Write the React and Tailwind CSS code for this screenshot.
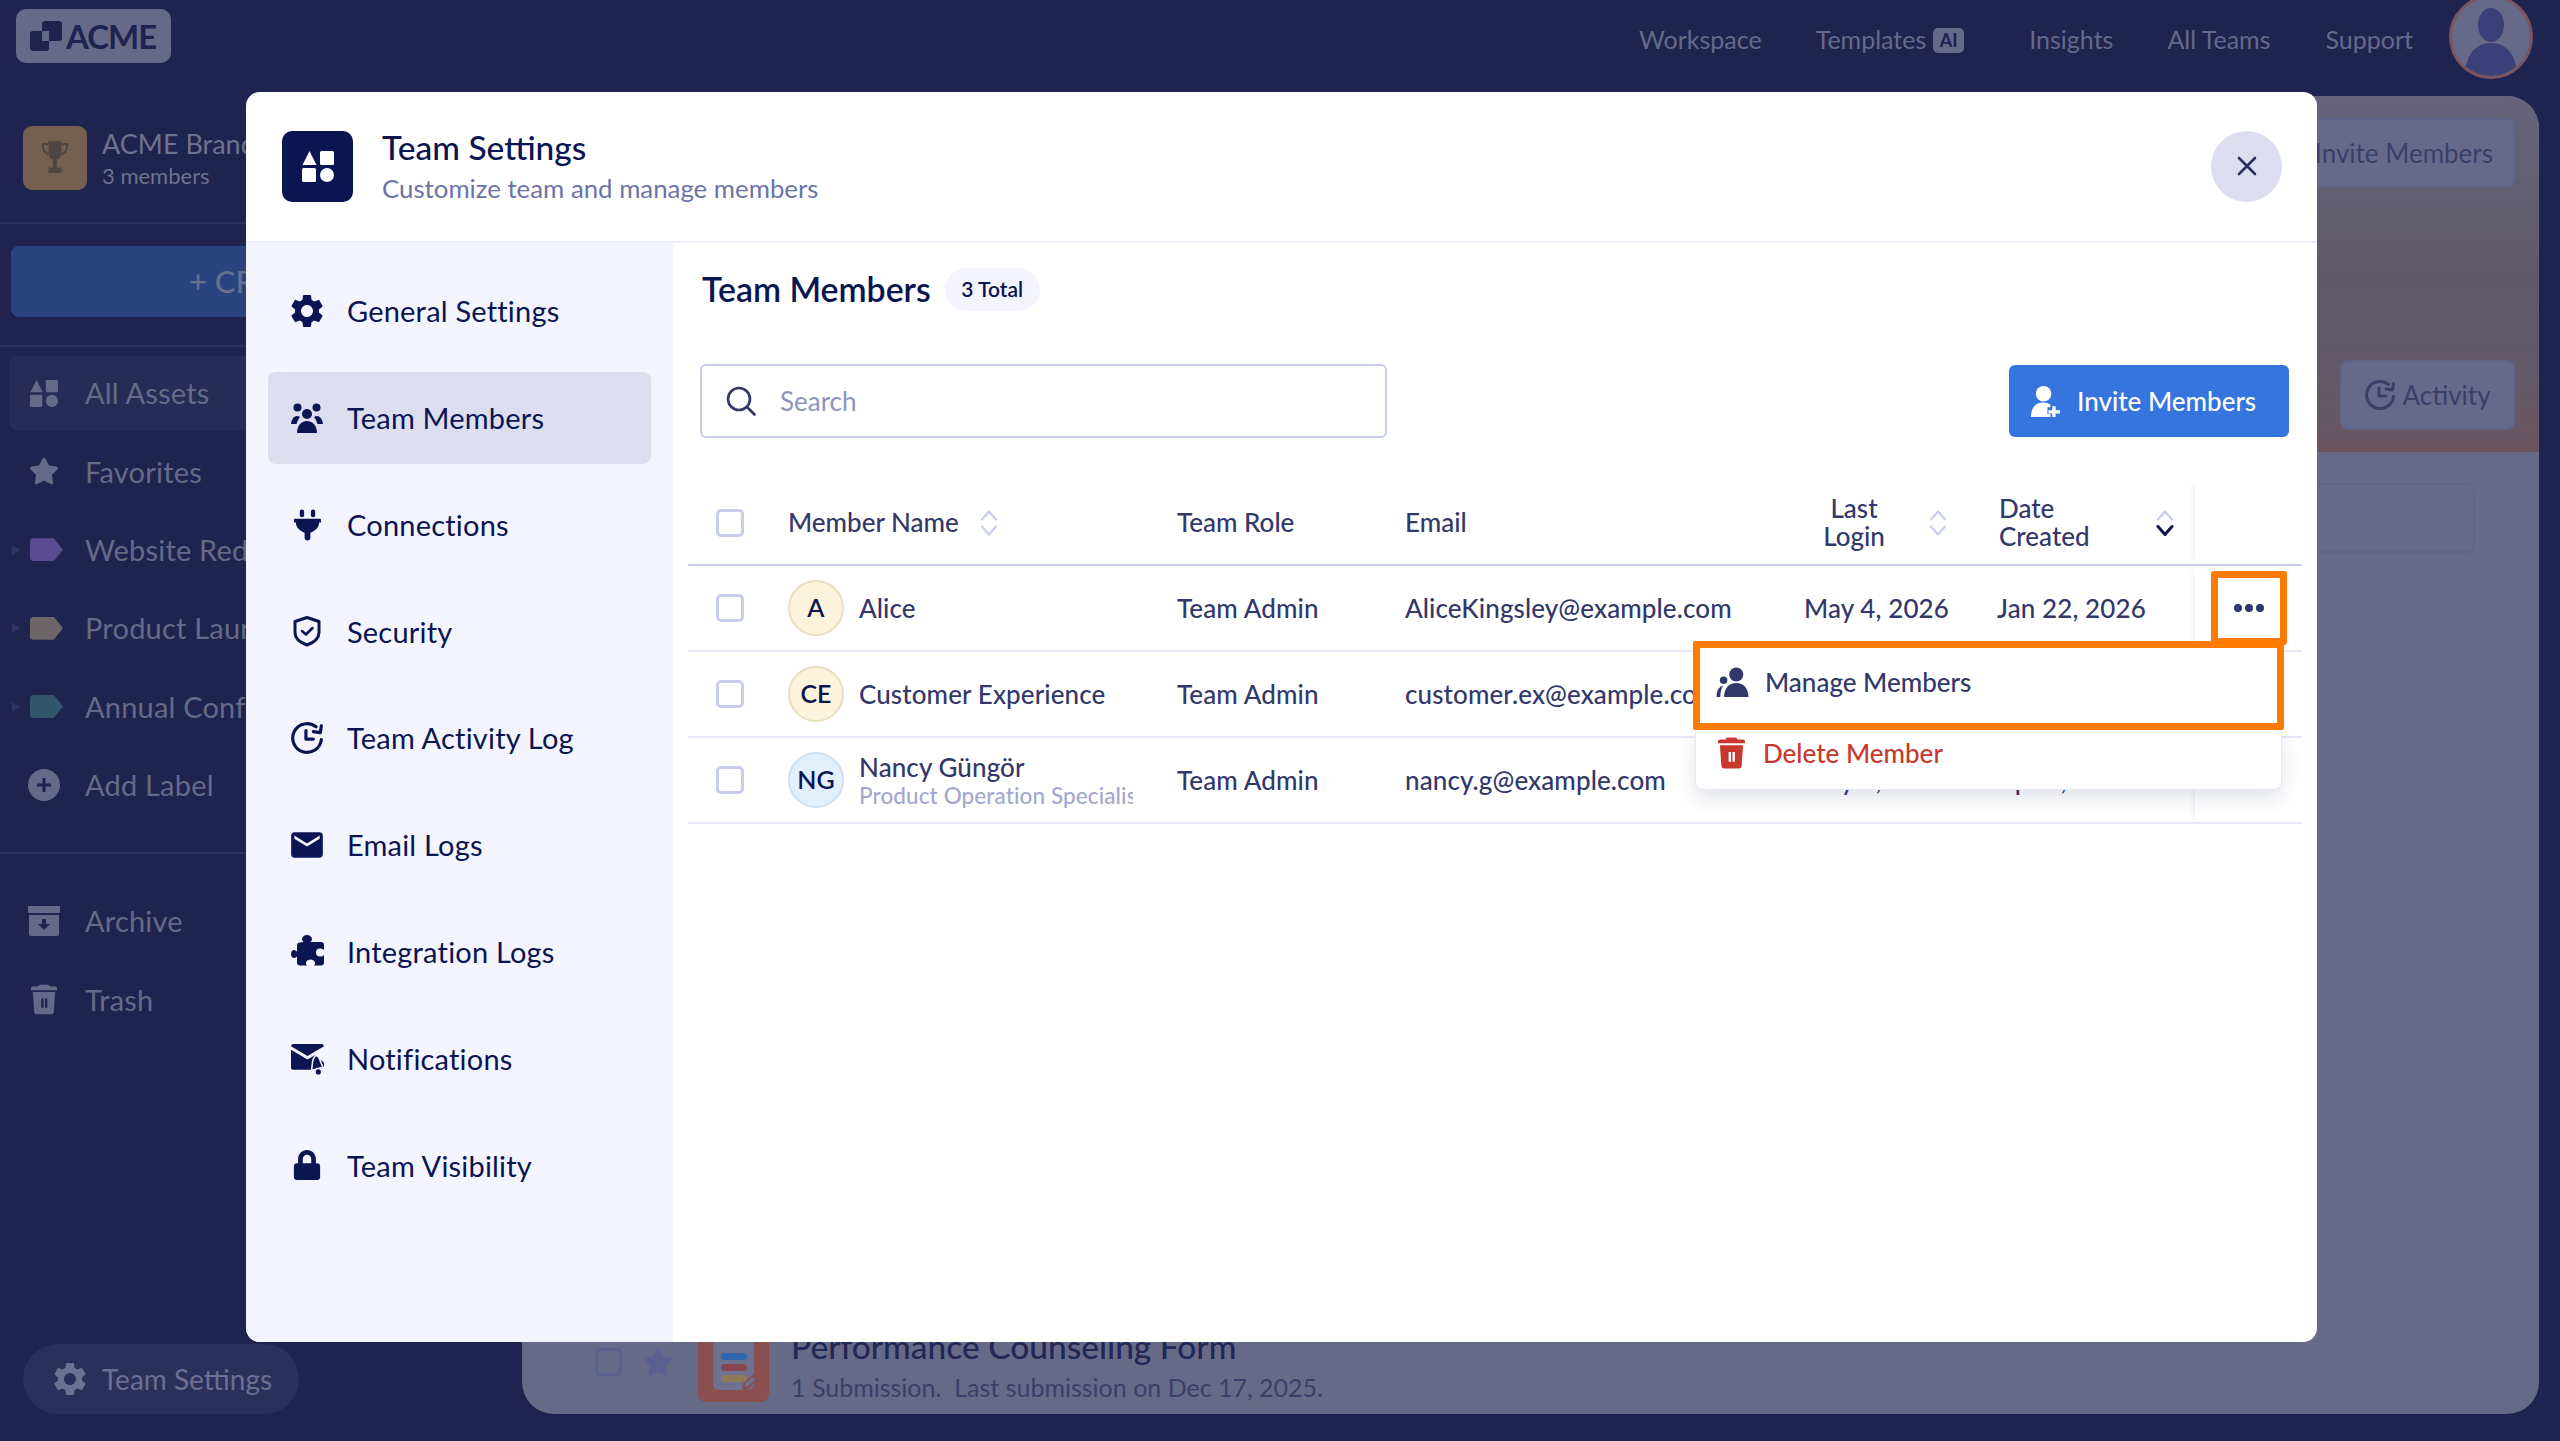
import { FaLock, FaStar } from 'react-icons/fa';
import { MdEmail, MdSettings } from 'react-icons/md';

const SIDE_ITEMS = [
  { label: 'General Settings', icon: <MdSettings size={40} /> },
  { label: 'Team Members', icon: <PeopleIcon /> },
  { label: 'Connections', icon: <PlugIcon /> },
  { label: 'Security', icon: <ShieldIcon /> },
  { label: 'Team Activity Log', icon: <ActivityIcon className="w-[34px] h-[34px]" /> },
  { label: 'Email Logs', icon: <MdEmail size={38} /> },
  { label: 'Integration Logs', icon: <PuzzleIcon /> },
  { label: 'Notifications', icon: <MailBellIcon /> },
  { label: 'Team Visibility', icon: <FaLock size={30} /> },
];

const MEMBERS = [
  { initials: 'A', name: 'Alice', email: 'AliceKingsley@example.com', login: 'May 4, 2026', created: 'Jan 22, 2026', tone: 'bg-[#fbf3dc] border-[#eadfc0]', dots: true },
  { initials: 'CE', name: 'Customer Experience', email: 'customer.ex@example.com', login: 'May 4, 2026', created: 'Jan 22, 2026', tone: 'bg-[#fbf3dc] border-[#eadfc0]' },
  { initials: 'NG', name: 'Nancy Güngör', sub: 'Product Operation Specialist', email: 'nancy.g@example.com', login: 'May 4, 2026', created: 'Apr 9, 2026', tone: 'bg-[#e1f0fb] border-[#cfe0ee]' },
];

const COLS = 'grid grid-cols-[100px_389px_228px_399px_193px_198px_108px]';

function ShapesIcon({ className }) {
  return (
    <svg viewBox="0 0 32 32" className={className} fill="currentColor">
      <path d="M7.500 1 14.500 15H.5z" />
      <rect x="18" y="1" width="14" height="14" rx="1.500" />
      <rect x="0" y="18" width="14" height="14" rx="1.500" />
      <ellipse cx="25" cy="25" rx="7" ry="7" />
    </svg>
  );
}

function PeopleIcon() {
  return (
    <svg viewBox="0 0 32 30" className="w-[32px] h-[30px] shrink-0" fill="currentColor">
      <circle cx="6.500" cy="4.500" r="4" />
      <circle cx="25.500" cy="4.500" r="4" />
      <circle cx="16" cy="11" r="5" />
      <path d="M6 30c0-7 4-12 10-12s10 5 10 12z" />
      <path d="M0 21c.5-4 2.500-8 6-8 1 0 2 .3 3 1-1.500 2-2.800 4.500-3.500 7z" />
      <path d="M32 21c-.5-4-2.500-8-6-8-1 0-2 .3-3 1 1.500 2 2.800 4.500 3.500 7z" />
    </svg>
  );
}

function PlugIcon() {
  return (
    <svg viewBox="0 0 28 32" className="w-[27px] h-[32px] shrink-0" fill="currentColor">
      <rect x="6" y="0" width="4.500" height="8" rx="2.200" />
      <rect x="17.500" y="0" width="4.500" height="8" rx="2.200" />
      <path d="M1 9.500h26a1 1 0 0 1 1 1v3h-2c0 5-4 9-9 10.500v5a3 3 0 0 1-6 0v-5C6 22.500 2 18.500 2 13.500H0v-3a1 1 0 0 1 1-1z" />
    </svg>
  );
}

function PuzzleIcon() {
  return (
    <svg viewBox="0 0 33 33" className="w-[33px] h-[33px] shrink-0" fill="currentColor">
      <path d="M12.500 7c-1-1-1.500-2-1.500-3a5 4 0 0 1 10 0c0 1-.5 2-1.500 3H30a3 3 0 0 1 3 3v5c-1-1-2.500-1.500-4-1.500a4 4 0 0 0 0 8c1.500 0 3-.5 4-1.500v7.500a3 3 0 0 1-3 3h-7c1-1 1.300-2 1-3-.5-2-2.500-3-4.500-3s-4 1-4.500 3c-.3 1 0 2 1 3H9a3 3 0 0 1-3-3v-6c-1 1-2 1.500-3 1.500-2 0-3-2-3-4s1-4 3-4c1 0 2 .5 3 1.500v-6a3 3 0 0 1 3-3z" />
    </svg>
  );
}

function ShieldIcon() {
  return (
    <svg viewBox="0 0 32 32" className="w-[32px] h-[34px] shrink-0" fill="none" stroke="currentColor" strokeWidth="3" strokeLinejoin="round" strokeLinecap="round">
      <path d="M16 2.500 28 6.500v11c0 6-5 10-12 12.500C9 27.500 4 23.500 4 17.500v-11z" />
      <path d="m11 16 4 3.500 6.500-6.500" strokeWidth="2.500" />
    </svg>
  );
}

function ActivityIcon({ className }) {
  return (
    <svg viewBox="0 0 32 32" className={`${className} shrink-0`} fill="none" stroke="currentColor" strokeWidth="3" strokeLinecap="round" strokeLinejoin="round">
      <path d="M29.500 17.500A13.500 13.500 0 1 1 24.500 5.500" />
      <path d="M29.500 4.500 28.500 11 22 10" />
      <path d="M15 9v8h7" />
    </svg>
  );
}

function MailBellIcon() {
  return (
    <svg viewBox="0 0 32 32" className="w-[33px] h-[33px] shrink-0" fill="currentColor">
      <path d="M2.500 2h27A2.500 2.500 0 0 1 32 4.200L16 13.500 0 4.200A2.500 2.500 0 0 1 2.500 2z" />
      <path d="M0 7.500 16 17l7.500-4.500L32 20v4h-11.500l-.5 3H2.500A2.500 2.500 0 0 1 0 24.500z" />
      <path d="M24.500 13c3 1.500 3.500 4 4.500 7l2 4.500-11 3 .5-5c.2-3 1.500-8 4-9.500z" stroke="#f3f4fd" strokeWidth="1.500" />
      <circle cx="26.500" cy="29" r="2.500" />
    </svg>
  );
}

function TrashIcon({ className }) {
  return (
    <svg viewBox="0 0 28 32" className={className} fill="currentColor">
      <path d="M10 0h8a2 2 0 0 1 2 2h6a2 2 0 0 1 2 2v2H0V4a2 2 0 0 1 2-2h6a2 2 0 0 1 2-2z" />
      <path fillRule="evenodd" d="M2 8h24l-1.500 21.500A2.700 2.700 0 0 1 22 32H6a2.700 2.700 0 0 1-2.500-2.500zm9 7v10h2.500V15zm4 0v10h2.500V15z" />
    </svg>
  );
}

function Sort({ active }) {
  return (
    <svg viewBox="0 0 18 28" className="w-[18px] h-[28px] shrink-0" fill="none" strokeWidth="2.200" strokeLinecap="round" strokeLinejoin="round">
      <path d="m2 10.500 7-8 7 8" stroke="#c8cdef" />
      <path d="m2 17.500 7 8 7-8" stroke={active ? '#0a1551' : '#c8cdef'} strokeWidth={active ? 3 : 2.200} />
    </svg>
  );
}

function Checkbox({ className = '' }) {
  return <span className={`block w-[28px] h-[28px] rounded-[5px] border-[3px] border-[#c8cdef] bg-white ${className}`} />;
}

function NavLink({ children }) {
  return <a className="text-[#666a88]">{children}</a>;
}

function LeftRow({ icon, label, active, arrow }) {
  return (
    <div className={`relative h-[74px] flex items-center pl-[18px] gap-[24px] rounded-[8px] ml-[9px] text-[#666a88] ${active ? 'bg-[#272b57]' : ''}`}>
      {arrow && <span className="absolute left-[3px] w-0 h-0 border-y-[5px] border-y-transparent border-l-[8px] border-l-[#2f3462]" />}
      <span className="w-[34px] flex justify-center shrink-0">{icon}</span>
      <span className="whitespace-nowrap text-[29px] tracking-[0.2px]">{label}</span>
    </div>
  );
}

function Tag({ color }) {
  return <span className={`block w-[33px] h-[23px] ml-[5px] shrink-0 ${color} rounded-[4px] [clip-path:polygon(0_0,72%_0,100%_50%,72%_100%,0_100%)]`} />;
}

function Backdrop() {
  return (
    <>
      <header className="h-[92px] flex items-center pl-[16px] pr-[27px]">
        <div className="w-[155px] h-[54px] -mt-[20px] bg-[#666a88] rounded-[10px] flex items-center pl-[14px] gap-[4px] text-[#1e2350]">
          <svg viewBox="0 0 32 30" className="w-[32px] h-[30px]" fill="currentColor">
            <rect x="12" y="0" width="20" height="20" rx="3" />
            <rect x="0" y="10" width="19" height="20" rx="3" />
            <rect x="12" y="10" width="7" height="10" fill="#666a88" />
          </svg>
          <span className="text-[33px] font-bold tracking-[-1px] leading-none">ACME</span>
        </div>
        <nav className="ml-auto flex items-center -mt-[12px] text-[25px]">
          <NavLink>Workspace</NavLink>
          <div className="flex items-center ml-[54px] gap-[7px]">
            <NavLink>Templates</NavLink>
            <span className="w-[31px] h-[25px] rounded-[5px] bg-[#666a88] text-[#1e2350] text-[18px] font-bold flex items-center justify-center">AI</span>
          </div>
          <div className="ml-[65px]"><NavLink>Insights</NavLink></div>
          <div className="ml-[54px]"><NavLink>All Teams</NavLink></div>
          <div className="ml-[55px]"><NavLink>Support</NavLink></div>
          <div className="ml-[36px] w-[84px] h-[84px] rounded-full border-[3px] border-[#7a5560] bg-[#666a88] overflow-hidden -mt-[6px]">
            <svg viewBox="0 0 78 78" className="w-full h-full" fill="#3a4078">
              <ellipse cx="39" cy="27" rx="13" ry="17" />
              <path d="M13 78c0-20 10-33 26-33s26 13 26 33z" />
            </svg>
          </div>
        </nav>
      </header>

      <div className="flex h-[1349px]">
        <aside className="w-[522px] shrink-0 flex flex-col">
          <div className="flex items-center gap-[15px] pl-[23px] mt-[34px] h-[64px]">
            <div className="w-[64px] h-[64px] rounded-[9px] bg-[#75604f] flex items-center justify-center text-[#4e4641]">
              <svg viewBox="0 0 32 40" className="w-[30px] h-[38px]" fill="currentColor">
                <path d="M9 2h14v12c0 5-3 8-7 8s-7-3-7-8zM14 22h4v8h-4zM9 30h14v6H9z" />
                <path d="M9 5H3c0 6 2 10 6 11M23 5h6c0 6-2 10-6 11" fill="none" stroke="currentColor" strokeWidth="2" />
              </svg>
            </div>
            <div className="flex flex-col whitespace-nowrap text-[#6f7290]">
              <span className="text-[27px] leading-[36px]">ACME Branding Team</span>
              <span className="text-[22px] leading-[28px]">3 members</span>
            </div>
          </div>
          <div className="h-[2px] bg-[#2a2f5c] mt-[32px]" />
          <div className="h-[71px] ml-[11px] mt-[22px] rounded-[8px] bg-[#2b437f] flex items-center pl-[178px] text-[#66708f] text-[31px] font-medium">
            + CREATE
          </div>
          <div className="h-[2px] bg-[#2a2f5c] mt-[28px]" />
          <div className="flex flex-col gap-[4.400px] mt-[9px] mr-[40px]">
            <LeftRow active label="All Assets" icon={<ShapesIcon className="w-[28px] h-[28px]" />} />
            <LeftRow label="Favorites" icon={<FaStar size={30} />} />
            <LeftRow arrow label="Website Redesign" icon={<Tag color="bg-[#5a4a8f]" />} />
            <LeftRow arrow label="Product Launch" icon={<Tag color="bg-[#6d6668]" />} />
            <LeftRow arrow label="Annual Conference" icon={<Tag color="bg-[#33566b]" />} />
            <LeftRow label="Add Label" icon={
              <svg viewBox="0 0 32 32" className="w-[32px] h-[32px]"><circle cx="16" cy="16" r="16" fill="#666a88" /><path d="M16 9v14M9 16h14" stroke="#1e2350" strokeWidth="3" /></svg>
            } />
          </div>
          <div className="h-[2px] bg-[#2a2f5c] mt-[30px]" />
          <div className="flex flex-col gap-[4.400px] mt-[30px] mr-[40px]">
            <LeftRow label="Archive" icon={
              <svg viewBox="0 0 32 32" className="w-[32px] h-[32px]" fill="#666a88"><rect x="0" y="1" width="32" height="7" rx="1" /><path d="M1 10h30v19a2 2 0 0 1-2 2H3a2 2 0 0 1-2-2z" /><path d="M14 14h4v5h4l-6 6-6-6h4z" fill="#1e2350" /></svg>
            } />
            <LeftRow label="Trash" icon={<TrashIcon className="w-[26px] h-[31px]" />} />
          </div>
          <div className="mt-auto mb-[27px] ml-[23px] w-[276px] h-[70px] rounded-full bg-[#2b2f5c] flex items-center pl-[27px] gap-[12px] text-[#6c7091] shrink-0">
            <MdSettings size={40} />
            <span className="text-[28px] whitespace-nowrap">Team Settings</span>
          </div>
        </aside>

        <main className="w-[2017px] h-[1318px] mt-[4px] rounded-[32px] bg-[#676a87] overflow-hidden flex flex-col">
          <div className="h-[356px] flex flex-col items-end pr-[24px] pt-[22px] bg-[linear-gradient(180deg,#66647c_0%,#5f5a6a_50%,#62596a_80%,#6b5560_100%)]">
            <div className="w-[260px] h-[69px] rounded-[8px] border-2 border-[#5f6488] bg-[#666a88] flex items-center justify-end pr-[20px] pt-[2px] text-[#3a3f68] text-[26px]">Invite Members</div>
            <div className="mt-[173px] w-[175px] h-[70px] rounded-[8px] border-2 border-[#5f6488] bg-[#666a88] flex items-center justify-center gap-[6px] text-[#3a3f68] text-[26px]">
              <ActivityIcon className="w-[32px] h-[32px]" />
              Activity
            </div>
          </div>
          <div className="self-end mt-[31px] mr-[64px] w-[600px] h-[70px] rounded-[8px] border-2 border-[#5f6488]" />
          <div className="mt-auto mb-[12px] h-[80px] flex items-center pl-[73px]">
            <span className="block w-[27px] h-[28px] rounded-[5px] border-[3px] border-[#5a6090]" />
            <span className="ml-[21px] text-[#5a6090]"><FaStar size={30} /></span>
            <div className="ml-[25px] w-[71px] h-[80px] rounded-[8px] bg-[#8a5050] flex items-end justify-center pb-[12px]">
              <div className="relative w-[41px] h-[60px] rounded-[6px] bg-[#6f7190] flex flex-col items-center justify-end gap-[4px] pb-[8px]">
                <span className="w-[26px] h-[7px] bg-[#2f66ad] rounded-full" />
                <span className="w-[26px] h-[7px] bg-[#8a4650] rounded-full" />
                <span className="w-[26px] h-[7px] bg-[#8f7a55] rounded-full" />
                <svg viewBox="0 0 20 20" className="absolute -right-[6px] -bottom-[2px] w-[20px] h-[20px]">
                  <path d="M15 1 19 5 9 17 2 19 3 11z" fill="#8a5050" />
                  <path d="M13 5 15.500 7.500 8.500 14 5 15 6 11z" fill="#6f7190" />
                </svg>
              </div>
            </div>
            <div className="ml-[22px] flex flex-col mt-[6px]">
              <span className="text-[33.500px] leading-[38px] text-[#232755] font-medium">Performance Counseling Form</span>
              <span className="text-[25px] leading-[34px] mt-[5px] text-[#3a3f68] whitespace-pre">1 Submission.  Last submission on Dec 17, 2025.</span>
            </div>
          </div>
        </main>
      </div>
    </>
  );
}

function MemberRow({ member }) {
  return (
    <div className={`${COLS} h-[86px] border-b-2 border-[#e6e8f8] items-center text-[#33386b] text-[26px] tracking-[0.1px] font-medium`}>
      <div className="pl-[28px]"><Checkbox /></div>
      <div className="flex items-center gap-[15px] min-w-0">
        <span className={`w-[56px] h-[56px] shrink-0 rounded-full border-2 ${member.tone} flex items-center justify-center text-[#0a1551] text-[25px] font-semibold`}>{member.initials}</span>
        <div className="flex flex-col min-w-0 w-[274px] overflow-hidden -mt-[1px]">
          <span className="whitespace-nowrap leading-[32px]">{member.name}</span>
          {member.sub && <span className="whitespace-nowrap text-[#a3a7d0] text-[22.500px] leading-[26px]">{member.sub}</span>}
        </div>
      </div>
      <div>Team Admin</div>
      <div>{member.email}</div>
      <div>{member.login}</div>
      <div>{member.created}</div>
      <div className="h-full bg-white pl-[16px] flex items-center shadow-[-5px_0_6px_-3px_rgba(10,21,81,0.06)]">
        {member.dots && (
          <button className="w-[76px] h-[74px] rounded-[3px] border-[7px] border-[#ff7a00] flex items-center justify-center gap-[3px]">
            <span className="w-[8px] h-[8px] rounded-full bg-[#33386b]" />
            <span className="w-[8px] h-[8px] rounded-full bg-[#33386b]" />
            <span className="w-[8px] h-[8px] rounded-full bg-[#33386b]" />
          </button>
        )}
      </div>
    </div>
  );
}

function TeamTable() {
  return (
    <div className="relative mt-[43px] mx-[15px]">
      <div className={`${COLS} h-[85px] border-b-2 border-[#c8cdef] items-center text-[#33386b] text-[26px] font-medium`}>
        <div className="pl-[28px]"><Checkbox /></div>
        <div className="flex items-center gap-[21px]">Member Name <Sort /></div>
        <div>Team Role</div>
        <div>Email</div>
        <div className="flex items-center">
          <span className="w-[100px] text-center leading-[28px] -mt-[2px]">Last<br />Login</span>
          <span className="ml-[25px]"><Sort /></span>
        </div>
        <div className="flex items-center pl-[2px]">
          <span className="w-[157px] leading-[28px] -mt-[2px]">Date<br />Created</span>
          <Sort active />
        </div>
        <div className="h-full bg-white shadow-[-5px_0_6px_-3px_rgba(10,21,81,0.06)]" />
      </div>
      {MEMBERS.map(m => <MemberRow key={m.name} member={m} />)}

      <div className="absolute left-[1005px] top-[160px] w-[591px]">
        <div className="h-[89px] border-[7px] border-[#ff7a00] rounded-[2px] bg-white flex items-center pl-[16px] pb-[7px] gap-[16px] text-[#33386b] text-[26px] font-medium relative z-10">
          <svg viewBox="0 0 34 32" className="w-[33px] h-[30px]" fill="currentColor">
            <circle cx="21" cy="8" r="7.500" />
            <path d="M8 32c0-9 5-15 13-15s13 6 13 15z" />
            <circle cx="7.500" cy="14" r="4" />
            <path d="M0 32c0-6 2-11 7-12-2 3-3 7-3 12z" />
          </svg>
          Manage Members
        </div>
        <div className="mx-[2px] h-[60px] rounded-b-[8px] bg-white border border-[#e6e8f8] border-t-0 flex items-center pl-[22px] pb-[13px] gap-[18px] text-[#c8382e] text-[26px] font-medium shadow-[0_8px_20px_rgba(10,21,81,0.12)]">
          <TrashIcon className="w-[27px] h-[32px]" />
          Delete Member
        </div>
      </div>
    </div>
  );
}

function TeamSettingsModal() {
  return (
    <div className="absolute left-[246px] top-[92px] w-[2071px] h-[1250px] rounded-[14px] bg-white overflow-hidden flex flex-col">
      <div className="h-[151px] shrink-0 border-b-2 border-[#eceefa] flex items-center pl-[36px] pr-[35px] pb-[1px]">
        <div className="w-[71px] h-[71px] rounded-[10px] bg-[#0a1551] text-white flex items-center justify-center">
          <ShapesIcon className="w-[32px] h-[32px]" />
        </div>
        <div className="ml-[29px] flex flex-col">
          <span className="text-[33.500px] leading-[40px] font-medium text-[#0a1551]">Team Settings</span>
          <span className="text-[25.800px] leading-[36px] mt-[3px] text-[#6c73a8]">Customize team and manage members</span>
        </div>
        <button className="ml-auto w-[71px] h-[71px] rounded-full bg-[#dcdef0] flex items-center justify-center text-[#2b2f5f]">
          <svg viewBox="0 0 20 20" className="w-[20px] h-[20px]" fill="none" stroke="currentColor" strokeWidth="2.600" strokeLinecap="round">
            <path d="m2 2 16 16M18 2 2 18" />
          </svg>
        </button>
      </div>

      <div className="flex flex-1 min-h-0">
        <aside className="w-[427px] shrink-0 bg-[#f3f4fd] px-[22px] pt-[22px] flex flex-col gap-[14.800px]">
          {SIDE_ITEMS.map(item => (
            <div key={item.label} className={`h-[92px] rounded-[8px] flex items-center pl-[23px] gap-[24px] text-[#0a1551] ${item.label === 'Team Members' ? 'bg-[#dcdef0]' : ''}`}>
              <span className="w-[32px] h-[40px] flex items-center justify-center shrink-0 [&>svg]:shrink-0">{item.icon}</span>
              <span className="text-[29px] tracking-[0.2px] whitespace-nowrap">{item.label}</span>
            </div>
          ))}
        </aside>

        <section className="flex-1 min-w-0 flex flex-col">
          <div className="flex items-center gap-[14px] pl-[29px] mt-[24px] h-[44px]">
            <h2 className="text-[33.800px] font-semibold text-[#0a1551]">Team Members</h2>
            <span className="h-[43px] w-[95px] rounded-full bg-[#f3f4fd] flex items-center justify-center text-[21px] font-semibold text-[#0a1551]">3 Total</span>
          </div>
          <div className="flex items-center justify-between pl-[27px] pr-[28px] mt-[53px]">
            <div className="w-[687px] h-[74px] rounded-[6px] border-2 border-[#c8cdef] flex items-center pl-[23px] gap-[23px] text-[#8f93bf] text-[26px]">
              <svg viewBox="0 0 32 32" className="w-[32px] h-[32px] text-[#33386b]" fill="none" stroke="currentColor" strokeWidth="2.600" strokeLinecap="round">
                <circle cx="14" cy="14" r="11" />
                <path d="m22.500 22.500 7 7" />
              </svg>
              Search
            </div>
            <button className="w-[280px] h-[72px] rounded-[6px] bg-[#3575dd] text-white flex items-center pl-[22px] gap-[17px] text-[26px] font-medium">
              <svg viewBox="0 0 30 32" className="w-[29px] h-[31px]" fill="currentColor">
                <circle cx="13" cy="8" r="8" />
                <path d="M0 32c0-10 5-15 13-15 3 0 5 1 7 2v3h-3v7h3v3z" />
                <path d="M22 21h3.500v4H30v3.500h-4.500V32H22v-3.500h-4V25h4z" />
              </svg>
              Invite Members
            </button>
          </div>
          <TeamTable />
        </section>
      </div>
    </div>
  );
}

export default function App() {
  return (
    <div className="relative w-[2560px] h-[1441px] overflow-hidden bg-[#1e2350] font-['Lato',sans-serif]">
      <Backdrop />
      <TeamSettingsModal />
    </div>
  );
}
